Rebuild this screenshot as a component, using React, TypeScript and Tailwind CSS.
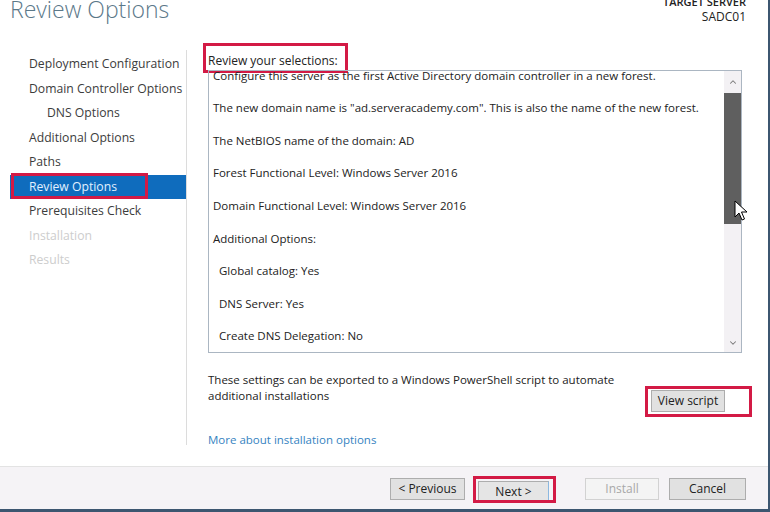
import React from 'react';
import { ChevronUp, ChevronDown } from 'lucide-react';

const navItems = [
  { label: 'Deployment Configuration', state: 'done' },
  { label: 'Domain Controller Options', state: 'done' },
  { label: 'DNS Options', state: 'sub' },
  { label: 'Additional Options', state: 'done' },
  { label: 'Paths', state: 'done' },
  { label: 'Review Options', state: 'active' },
  { label: 'Prerequisites Check', state: 'done' },
  { label: 'Installation', state: 'off' },
  { label: 'Results', state: 'off' },
];

const summary = [
  { text: 'Configure this server as the first Active Directory domain controller in a new forest.', indent: false },
  { text: 'The new domain name is "ad.serveracademy.com". This is also the name of the new forest.', indent: false },
  { text: 'The NetBIOS name of the domain: AD', indent: false },
  { text: 'Forest Functional Level: Windows Server 2016', indent: false },
  { text: 'Domain Functional Level: Windows Server 2016', indent: false },
  { text: 'Additional Options:', indent: false },
  { text: 'Global catalog: Yes', indent: true },
  { text: 'DNS Server: Yes', indent: true },
  { text: 'Create DNS Delegation: No', indent: true },
  { text: 'Source DC: (none)', indent: true },
];

// red annotation frame drawn over a control
const Mark: React.FC<{ className: string }> = ({ className }) => (
  <div className={`absolute border-[3px] border-[#d31a45] pointer-events-none ${className}`} />
);

const WinButton: React.FC<{ label: string; disabled?: boolean; primary?: boolean; className?: string }> = ({
  label, disabled, primary, className = '',
}) => (
  <button
    className={`h-[22px] text-[12px] leading-none border ${
      disabled
        ? 'bg-[#f4f4f4] border-[#d2d2d2] text-[#a8a8a8]'
        : primary
        ? 'bg-[#e5e5e5] border-[#adadad] border-r-[#8bb8e0] border-b-[#8bb8e0] text-[#222]'
        : 'bg-[#e1e1e1] border-[#adadad] text-[#222]'
    } ${className}`}
  >
    {label}
  </button>
);

export default function App() {
  return (
    <div
      className="relative w-[770px] h-[512px] overflow-hidden bg-white border-r-2 border-b-[3px] border-[#3c5670] flex flex-col text-[#333]"
      style={{ fontFamily: '"Open Sans", "Noto Sans", sans-serif' }}
    >
      {/* header */}
      <div className="h-[45px] flex justify-between pl-[10px] pr-[22px] shrink-0">
        <div className="text-[23px] font-light leading-none -mt-[2px] text-[#5b7889]">Review Options</div>
        <div className="flex flex-col items-end -mt-[6px] text-[11px] leading-[15px] font-semibold text-[#222]">
          <span>TARGET SERVER</span>
          <span className="text-[12px] font-normal">SADC01</span>
        </div>
      </div>

      {/* body */}
      <div className="flex h-[421px] shrink-0">
        <div className="w-[187px] shrink-0 self-start mt-[5px] h-[395px] border-r border-[#dcdcdc] pt-[2px]">
          {navItems.map((it) => (
            <div
              key={it.label}
              className={`relative ml-[10px] h-[24.5px] flex items-center text-[12.2px] whitespace-nowrap ${
                it.state === 'active' ? 'bg-[#0f6cbd] text-[#e2f0ff]' : ''
              } ${it.state === 'off' ? 'text-[#cdcdcd]' : it.state === 'active' ? '' : 'text-[#3c3c3c]'} ${
                it.state === 'sub' ? 'pl-[37px]' : 'pl-[19px]'
              }`}
            >
              {it.label}
              {it.state === 'active' && <Mark className="left-[1px] -top-[2px] w-[137px] h-[26px]" />}
            </div>
          ))}
        </div>

        <div className="flex-1 pl-[21px] pr-[26px] flex flex-col">
          <div className="relative h-[25px] flex items-end text-[12px] text-[#222]">
            <span className="leading-[16px] mb-[1px]">Review your selections:</span>
            <Mark className="-left-[5px] -top-[2px] w-[145px] h-[30px]" />
          </div>

          <div className="relative h-[283px] border border-[#abb6c2] overflow-hidden flex">
            <div className="flex-1 -mt-[12px] pl-[4px] text-[11.5px] text-[#222]">
              {summary.map((s) => (
                <div key={s.text} className={`h-[32.6px] flex items-center whitespace-nowrap ${s.indent ? 'pl-[6px]' : ''}`}>
                  {s.text}
                </div>
              ))}
            </div>
            <div className="w-[17px] shrink-0 bg-[#f3f1f4] flex flex-col items-center">
              <div className="h-[22px] flex items-center justify-center">
                <ChevronUp size={10} strokeWidth={2.5} className="text-[#777]" />
              </div>
              <div className="w-full h-[131px] bg-[#5f5f5f]" />
              <div className="flex-1" />
              <div className="h-[18px] flex items-center justify-center">
                <ChevronDown size={10} strokeWidth={2.5} className="text-[#777]" />
              </div>
            </div>
          </div>

          <div className="flex items-start justify-between mt-[19px] text-[11.5px] text-[#222]">
            <div className="leading-[16px]">
              These settings can be exported to a Windows PowerShell script to automate
              <br />
              additional installations
            </div>
            <div className="relative mt-[18px] mr-[17px]">
              <WinButton label="View script" className="w-[74px] h-[20px]" />
              <Mark className="-left-[6px] -top-[4px] w-[107px] h-[31px]" />
            </div>
          </div>

          <div className="mt-[19px] text-[11.5px] text-[#3683c1]">More about installation options</div>
        </div>
      </div>

      {/* footer */}
      <div className="flex-1 border-t border-[#e3e3e3] bg-[#f5f3f6] flex items-start justify-end pt-[11px] pr-[22px]">
        <WinButton label="< Previous" className="w-[75px]" />
        <div className="relative ml-[13px]">
          <WinButton label="Next >" primary className="w-[71px]" />
          <Mark className="-left-[5px] -top-[2px] w-[83px] h-[27px]" />
        </div>
        <WinButton label="Install" disabled className="w-[74px] ml-[36px]" />
        <WinButton label="Cancel" className="w-[77px] ml-[10px]" />
      </div>

      {/* mouse pointer resting on the scrollbar */}
      <svg className="absolute left-[734px] top-[200px]" width="14" height="22" viewBox="0 0 14 22">
        <path d="M1 1 L1 17 L5 13 L8 20 L10.5 19 L7.5 12 L13 12 Z" fill="#fff" stroke="#000" strokeWidth="1" strokeLinejoin="round" />
      </svg>
    </div>
  );
}
